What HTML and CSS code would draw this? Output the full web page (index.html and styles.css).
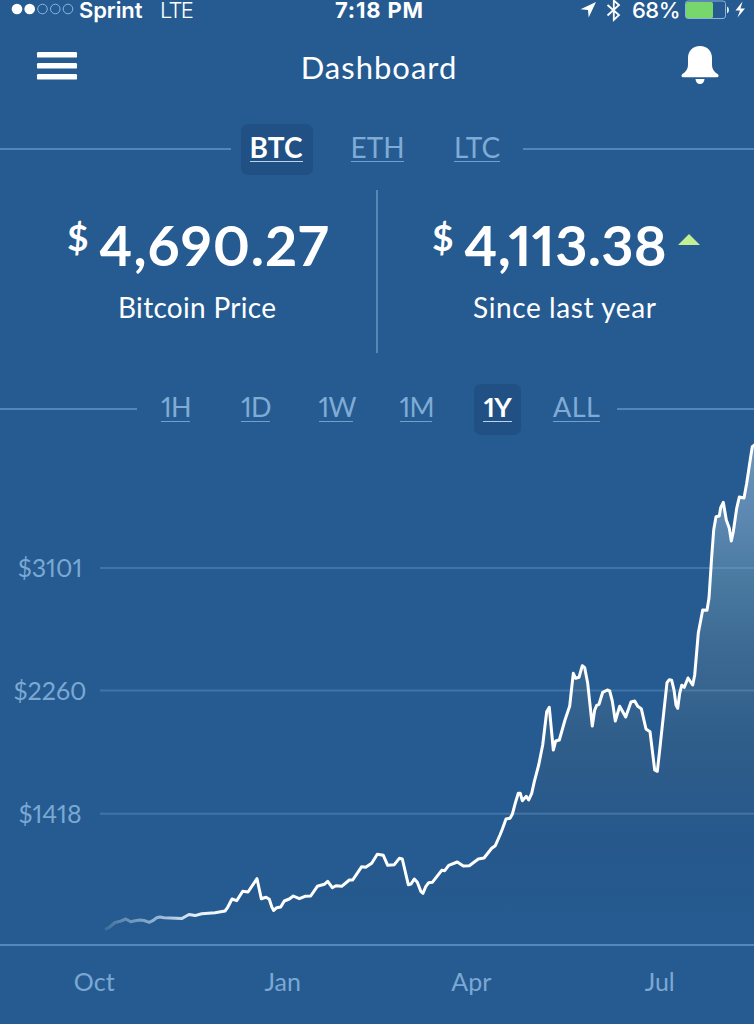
FILE: index.html
```html
<!DOCTYPE html>
<html lang="en">
<head>
    <meta charset="UTF-8">
    <meta name="viewport" content="width=device-width, initial-scale=1.0">
    <title>Dashboard</title>
    <link rel="stylesheet" href="styles.css">
</head>
<body>

    <div class="status-bar">
        <div class="status-left">
            <svg class="signal" width="64" height="12" viewBox="0 0 64 12">
                <g fill="#fff">
                    <circle cx="6" cy="6" r="5.3" />
                    <circle cx="18.7" cy="6" r="5.3" />
                </g>
                <g fill="none" stroke="#86b5e3" stroke-width="1">
                    <circle cx="31.5" cy="6" r="4.8" />
                    <circle cx="44.3" cy="6" r="4.8" />
                    <circle cx="57" cy="6" r="4.8" />
                </g>
            </svg>
            <span class="carrier">Sprint</span>
            <span class="network">LTE</span>
        </div>
        <div class="clock">7:18 PM</div>
        <div class="status-right">
            <svg width="50" height="24" viewBox="580 0 50 24">
                <path d="M596 2 L580.5 9.3 L588 10 L588.7 17.5 Z" fill="#fff" />
                <path d="M607.5 5 L619 15 L613.8 20 V0.5 L619 5 L607.5 15.5" fill="none" stroke="#fff" stroke-width="1.8" />
            </svg>
            <span class="percent">68%</span>
            <svg width="62" height="24" viewBox="684 0 62 24">
                <rect x="685.5" y="1" width="40" height="17.5" rx="2.5" fill="none" stroke="#8fb3d6" />
                <rect x="686" y="2" width="27" height="16" rx="1.5" fill="#78d76c" />
                <path d="M727 6.5 Q729 7 729 10 Q729 13 727 13.5 Z" fill="#dcebf7" />
                <path d="M742.5 1.5 L735.5 10.5 H740 L737.5 17.5 L745 8.5 H740.5 Z" fill="#fff" />
            </svg>
        </div>
    </div>

    <header>
        <svg class="menu" width="42" height="30" viewBox="0 0 42 30" fill="#fff">
            <rect x="1" y="1" width="40" height="5.6" rx="1.2" />
            <rect x="1" y="12" width="40" height="5.6" rx="1.2" />
            <rect x="1" y="23" width="40" height="5.6" rx="1.2" />
        </svg>
        <h1>Dashboard</h1>
        <svg class="bell" width="40" height="40" viewBox="680 45 40 40" fill="#fff">
            <path d="M700 46 C692.5 46 688 51 688 58 V64 C688 69 686.5 71 682.5 74 C680.8 75.5 681.5 77.3 683.5 77.3 H716.5 C718.7 77.3 719.4 75.5 717.5 74 C713.5 71 712 69 712 64 V58 C712 51 707.5 46 700 46 Z" />
            <path d="M695.5 79 H704.5 Q704 84 700 84 Q696 84 695.5 79 Z" />
        </svg>
    </header>

    <nav class="tabs coins">
        <i class="rule rule-left"></i>
        <a class="tab active"><span>BTC</span></a>
        <a class="tab"><span>ETH</span></a>
        <a class="tab"><span>LTC</span></a>
        <i class="rule"></i>
    </nav>

    <section class="prices">
        <div class="price">
            <div class="amount"><sup>$</sup><span class="value">4,690.27</span></div>
            <div class="caption">Bitcoin Price</div>
        </div>
        <div class="price change">
            <div class="amount"><sup>$</sup><span class="value">4,113.38</span><i class="up"></i></div>
            <div class="caption">Since last year</div>
        </div>
    </section>

    <nav class="tabs ranges">
        <i class="rule rule-left"></i>
        <a class="tab"><span>1H</span></a>
        <a class="tab"><span>1D</span></a>
        <a class="tab"><span>1W</span></a>
        <a class="tab"><span>1M</span></a>
        <a class="tab active"><span>1Y</span></a>
        <a class="tab"><span>ALL</span></a>
        <i class="rule"></i>
    </nav>

    <section class="chart">
        <div class="y-axis">
            <span>$3101</span>
            <span>$2260</span>
            <span>$1418</span>
        </div>
        <svg width="654" height="504" viewBox="100 440 654 504">
            <defs>
                <linearGradient id="area" gradientUnits="userSpaceOnUse" x1="0" y1="445" x2="0" y2="944">
                    <stop offset="0" stop-color="#6c94bb" />
                    <stop offset="0.15" stop-color="#5b87b0" />
                    <stop offset="0.28" stop-color="#48799f" />
                    <stop offset="0.4" stop-color="#3d6a94" />
                    <stop offset="0.6" stop-color="#2f5d8a" />
                    <stop offset="0.8" stop-color="#26588c" />
                    <stop offset="1" stop-color="#255b91" />
                </linearGradient>
                <linearGradient id="stroke" gradientUnits="userSpaceOnUse" x1="104" y1="0" x2="235" y2="0">
                    <stop offset="0" stop-color="#fff" stop-opacity="0.1" />
                    <stop offset="0.3" stop-color="#c4dcf5" stop-opacity="0.55" />
                    <stop offset="0.7" stop-color="#eef6ff" stop-opacity="0.95" />
                    <stop offset="1" stop-color="#fff" />
                </linearGradient>
            </defs>
            <path id="fill" fill="url(#area)" />
            <g fill="#7fb0df" fill-opacity="0.3">
                <rect x="100" y="567" width="654" height="2" />
                <rect x="100" y="689.5" width="654" height="2" />
                <rect x="100" y="812.7" width="654" height="2" />
            </g>
            <polyline id="line" fill="none" stroke="url(#stroke)" stroke-width="3" stroke-linejoin="round" />
        </svg>
    </section>

    <div class="x-axis">
        <span>Oct</span>
        <span>Jan</span>
        <span>Apr</span>
        <span>Jul</span>
    </div>

    <script>
        const points = `
            105,929.3 109,927.5 115,922.5 120,921.3 125.7,919 130.7,921.7 135,920.8 140,920 144,920.5 149.3,922.3
            152.7,920.7 156.7,917.7 160,917 164,917.7 170,918 181.7,918.6 185,916.7 189,914.5 195,915.6 201.7,913.7
            215,912.7 225,911 227.7,907.3 232,899 236.7,900.7 242.7,891.3 248,892 257,878.7 261.3,898.7 266,897.3
            269.3,899.3 271.7,906.7 273.7,910.5 276.7,907.7 280.7,907 284.3,901 289.3,899 293.3,896 299.3,898.7
            305,896.3 310.7,896 317.3,886.3 324.3,884.3 327.7,881.3 332.3,887.7 336,885.7 341.7,886.3 349.3,880
            352.7,880 361.7,866.7 365.7,867.3 371.7,863.3 377.3,854.3 383.3,855.3 387.7,865.3 394.3,864.7
            399.3,858.3 402.3,859 408.3,884.7 411,884 414.3,879 417.3,882.3 421,891.7 423,893.3 425.7,886.7
            428.7,882.7 432.3,882.3 441.7,870.3 444.7,870.7 448.7,865.3 457.3,862 463.3,866 469.3,865.7 478.3,859
            484,858 491.7,848.3 495.3,845.7 500,835 502.3,829.3 506,819 510,818.3 512.3,814.3 515.7,801.7
            518.3,793.3 520.3,793.3 522.3,800.7 526.3,796.3 528.7,800 531.7,793.3 534.3,781.7 538.7,765 542.7,745
            546.7,711.7 549.3,707.3 553.3,750 555.7,741 559.3,740 565,720 569.7,706 573.3,673.3 575.7,678.3
            579,677.3 582.3,665.7 584.7,667.7 587.7,683.3 592.3,726 594.7,710 596.7,705.3 599,704.3 602.7,692.3
            607.3,690 609.7,691 612.3,701 615.3,721 619.7,706.3 625.7,717 631,702 634.7,701 637.7,706.3
            641.3,708.7 646,729 650,731.7 654.7,770 657.3,771.3 659.7,750 663.3,716.7 667,682.7 669.3,679.7
            671.7,680.3 674,690 676,705 677.7,708.3 679.7,693.3 681.7,685.3 684.3,687.3 688,678 692.7,685
            694.7,675 698.3,633 702.7,610 707,610.3 709,598 711.7,556.7 713.7,530 716,516.7 719.3,516
            720.7,507.7 723.3,502.3 726.3,520 729.3,528.3 731.3,541 733.3,531.7 736.7,508.3 739.3,497 744,498
            746.7,483.3 750.7,456.7 752.3,446.7 755,444.5`.trim().replace(/\s+/g, ' ');

        document.getElementById('line').setAttribute('points', points);
        document.getElementById('fill').setAttribute('d', `M${points} L755,944 L105,944 Z`);
    </script>
</body>
</html>
```

FILE: styles.css
```css
* {
    margin: 0;
    padding: 0;
    box-sizing: border-box;
}

body {
    width: 754px;
    height: 1024px;
    overflow: hidden;
    background-color: #255b91;
    color: #fff;
    font-family: Lato, sans-serif;
    font-variant-numeric: proportional-nums;
}

svg {
    display: block;
    flex-shrink: 0;
}

.status-bar {
    display: grid;
    grid-template-columns: 1fr 92px 1fr;
    height: 24px;
    line-height: 21px;
    font-family: Inter, sans-serif;
    font-size: 22px;
    white-space: nowrap;
}

.status-left {
    display: flex;
    padding-left: 11px;
}

.signal {
    margin-top: 3px;
}

.carrier {
    width: 65px;
    margin-left: 4px;
    font-weight: 600;
    letter-spacing: -0.1px;
}

.network {
    margin-left: 16px;
    font-weight: 300;
    letter-spacing: -1.8px;
}

.clock {
    padding-left: 4px;
    font-weight: 700;
    letter-spacing: 0.8px;
}

.status-right {
    display: flex;
    justify-content: flex-end;
    padding-right: 8px;
}

.percent {
    width: 49px;
    margin-left: 2px;
    margin-right: 3px;
    font-weight: 500;
    letter-spacing: -0.5px;
}

header {
    display: flex;
    justify-content: space-between;
    height: 100px;
    padding: 21px 34px 0 36px;
}

.menu {
    margin-top: 6px;
}

h1 {
    font-size: 31px;
    font-weight: 400;
    line-height: 44px;
    letter-spacing: 1px;
}

.tabs {
    display: flex;
    height: 51px;
}

.rule {
    flex: 1;
    height: 2px;
    margin-top: 24px;
    background-color: #4f86bb;
}

.tab {
    display: flex;
    justify-content: center;
    border-radius: 7px;
    padding-top: 9px;
    color: #7fabd5;
    font-size: 28px;
    line-height: 28px;
}

.tab span {
    display: block;
    height: 29px;
    border-bottom: 1px solid #6fa0d0;
    text-align: center;
    white-space: nowrap;
}

.tab.active {
    background-color: #205084;
    color: #fff;
    font-weight: 700;
}

.tab.active span {
    border-color: #b8d4ee;
}

.coins .rule-left {
    flex: 0 0 231px;
    margin-right: 10px;
}

.coins .tab {
    width: 72px;
    margin-right: 28px;
}

.coins .tab.active {
    padding-right: 2px;
}

.coins .tab span {
    width: 53px;
}

.coins .tab:nth-child(4) {
    width: 46px;
    margin-left: 13px;
    margin-right: 23px;
}

.coins .tab:nth-child(4) span {
    width: 46px;
}

.prices {
    display: grid;
    grid-template-columns: 378px 376px;
    height: 163px;
    margin-top: 15px;
}

.price {
    padding-left: 67px;
    border-right: 2px solid #5588b9;
}

.price.change {
    padding-left: 54px;
    border-right: 0;
}

.amount {
    display: flex;
    height: 93px;
    padding-top: 27px;
    font-weight: 700;
}

.amount sup {
    width: 32px;
    font-size: 37px;
    line-height: 40px;
}

.value {
    font-size: 56px;
    line-height: 56px;
    letter-spacing: 1px;
}

.change .value {
    letter-spacing: 0.2px;
}

.up {
    width: 0;
    height: 0;
    margin: 17px 0 0 11px;
    border-left: 11px solid transparent;
    border-right: 11px solid transparent;
    border-bottom: 11px solid #c2ee94;
}

.caption {
    padding-left: 51px;
    font-size: 28px;
    line-height: 48px;
    letter-spacing: 0.3px;
}

.change .caption {
    padding-left: 41px;
    letter-spacing: 0.6px;
}

.ranges {
    margin-top: 31px;
}

.ranges .rule-left {
    flex: 0 0 137px;
    margin-right: 15px;
}

.ranges .tab {
    width: 47px;
    margin-right: 33px;
    font-size: 27px;
    letter-spacing: -0.6px;
}

.ranges .tab:nth-child(5) {
    margin-right: 35px;
}

.ranges .tab.active {
    margin-right: 32px;
}

.ranges .tab:nth-child(7) {
    margin-right: 17px;
    letter-spacing: 0.4px;
}

.ranges .tab span {
    width: 29px;
}

.ranges .tab:nth-child(4) span {
    width: 34px;
}

.ranges .tab:nth-child(5) span {
    width: 32px;
}

.ranges .tab:nth-child(7) span {
    width: 47px;
}

.chart {
    display: flex;
    height: 506px;
    margin-top: 5px;
    border-bottom: 2px solid #5588ba;
}

.chart svg {
    height: 504px;
}

.y-axis {
    display: flex;
    flex-direction: column;
    gap: 93px;
    width: 100px;
    padding-top: 112px;
    text-align: center;
}

.y-axis span {
    font-size: 25px;
    line-height: 30px;
    color: #7ba8d3;
}

.x-axis {
    display: grid;
    grid-template-columns: repeat(4, 188.5px);
    height: 74px;
    padding-top: 17px;
    text-align: center;
    color: #7ba8d3;
    font-size: 25px;
    line-height: 36px;
}
```
